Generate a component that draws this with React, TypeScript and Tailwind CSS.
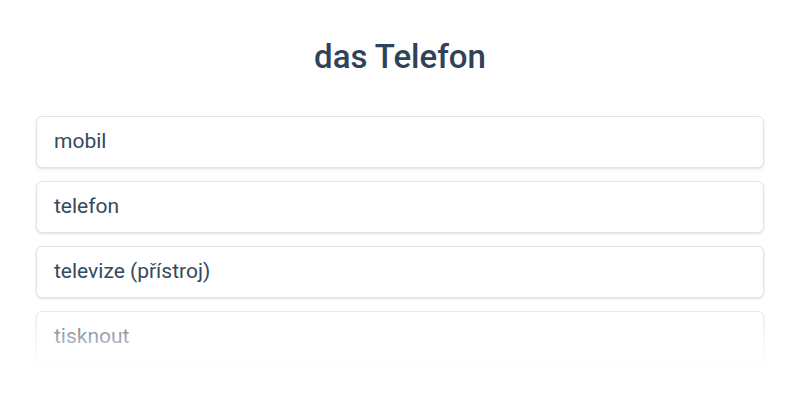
export default function App() {
  const words = ["mobil", "telefon", "televize (přístroj)", "tisknout"];

  return (
    <div className="w-[800px] h-[400px] bg-white overflow-hidden" style={{ fontFamily: "Roboto, 'Liberation Sans', sans-serif" }}>
      {/* Heading */}
      <h1 className="pt-[37px] h-[116px] text-center text-[33px] leading-10 font-medium text-[#2f4358]">
        das Telefon
      </h1>

      {/* Options list, fading out at the bottom */}
      <div className="relative px-9 h-[284px] overflow-hidden">
        <div className="flex flex-col gap-[13px]">
          {words.map((w) => (
            <div
              key={w}
              className="h-[52px] flex items-center px-[17px] bg-white border border-[#e2e4e7] rounded-md shadow-sm text-[21px] text-[#34495e]"
            >
              {w}
            </div>
          ))}
        </div>
        <div className="absolute left-0 right-0 top-[185px] h-[70px] bg-linear-to-b from-white/0 to-white" />
      </div>
    </div>
  );
}
